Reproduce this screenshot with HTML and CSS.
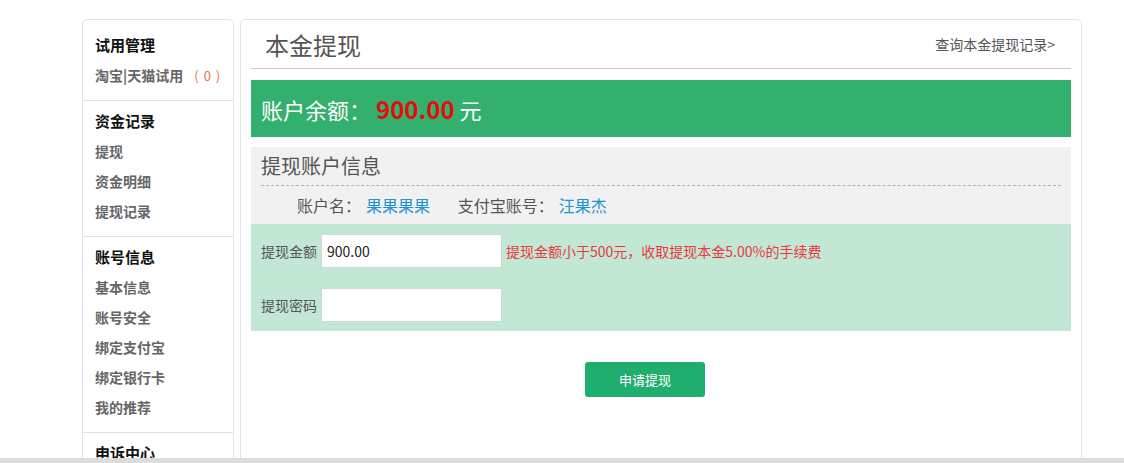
FILE: index.html
```html
<!DOCTYPE html>
<html lang="zh-CN">
<head>
    <meta charset="UTF-8" />
    <title>本金提现</title>
    <link rel="stylesheet" href="styles.css">
</head>
<body>
    <div class="wrap">
        <div class="side-menu">
            <div class="menu-group">
                <div class="menu-title">试用管理</div>
                <a class="menu-item" href="#">淘宝|天猫试用 <span class="count">( 0 )</span></a>
            </div>
            <div class="menu-group">
                <div class="menu-title">资金记录</div>
                <a class="menu-item" href="#">提现</a>
                <a class="menu-item" href="#">资金明细</a>
                <a class="menu-item" href="#">提现记录</a>
            </div>
            <div class="menu-group">
                <div class="menu-title">账号信息</div>
                <a class="menu-item" href="#">基本信息</a>
                <a class="menu-item" href="#">账号安全</a>
                <a class="menu-item" href="#">绑定支付宝</a>
                <a class="menu-item" href="#">绑定银行卡</a>
                <a class="menu-item" href="#">我的推荐</a>
            </div>
            <div class="menu-group">
                <div class="menu-title">申诉中心</div>
                <a class="menu-item" href="#">我的申诉</a>
            </div>
        </div>

        <div class="main-box">
            <div class="page-head">
                <h2>本金提现</h2>
                <a class="head-link" href="#">查询本金提现记录&gt;</a>
            </div>

            <div class="balance-bar">
                账户余额：<span class="balance-num">900.00</span> 元
            </div>

            <div class="account-info">
                <div class="info-title">提现账户信息</div>
                <div class="info-row">
                    <span class="info-label">账户名：</span><span class="info-value">果果果果</span>
                    <span class="info-label info-gap">支付宝账号：</span><span class="info-value">汪果杰</span>
                </div>
            </div>

            <div class="withdraw-form">
                <div class="form-row">
                    <label class="form-label">提现金额</label>
                    <input class="form-input" type="text" value="900.00" />
                    <span class="form-tip">提现金额小于500元，收取提现本金5.00%的手续费</span>
                </div>
                <div class="form-row">
                    <label class="form-label">提现密码</label>
                    <input class="form-input" type="password" value="" />
                </div>
            </div>

            <button class="submit-btn">申请提现</button>
        </div>
    </div>
    <div class="scroll-strip"></div>
</body>
</html>
```

FILE: styles.css
```css
body {
    font-family: "Noto Sans CJK SC", "Liberation Sans", sans-serif;
    background: #fff;
    margin: 0;
    padding: 19px 0 0;
    color: #555;
}
a {
    text-decoration: none;
}
.wrap {
    display: flex;
    align-items: flex-start;
    gap: 6px;
    margin-left: 82px;
    width: 1000px;
}
.side-menu {
    width: 152px;
    box-sizing: border-box;
    border: 1px solid #e3e3e3;
    border-radius: 5px;
    padding-top: 5px;
}
.menu-group {
    display: flex;
    flex-direction: column;
    padding: 5px 0 10px 12px;
    border-bottom: 1px solid #e3e3e3;
}
.menu-group:first-child {
    padding-bottom: 9px;
}
.menu-title {
    font-size: 15px;
    font-weight: bold;
    color: #111;
    line-height: 30px;
}
.menu-item {
    font-size: 14px;
    font-weight: bold;
    color: #666;
    line-height: 30px;
}
.count {
    color: #e4774f;
    font-weight: normal;
    font-size: 13px;
    margin-left: 8px;
    letter-spacing: 1px;
}
.main-box {
    flex: 1;
    box-sizing: border-box;
    border: 1px solid #e3e3e3;
    border-radius: 5px;
    padding: 0 10px 50px;
    min-height: 450px;
}
.page-head {
    display: flex;
    justify-content: space-between;
    align-items: center;
    height: 48px;
    padding: 0 16px 0 14px;
    border-bottom: 1px solid #b9cfd6;
}
.page-head h2 {
    margin: 0;
    font-size: 24px;
    font-weight: normal;
    color: #555;
}
.head-link {
    font-size: 14px;
    color: #555;
}
.balance-bar {
    margin-top: 11px;
    height: 57px;
    line-height: 57px;
    background: #33b06d;
    color: #fff;
    font-size: 22px;
    padding-left: 10px;
}
.balance-num {
    color: #e20d0d;
    font-weight: bold;
    font-size: 24px;
    margin-left: 5px;
}
.account-info {
    margin-top: 10px;
    background: #f1f1f1;
    padding: 0 10px;
}
.info-title {
    font-size: 20px;
    color: #555;
    height: 38px;
    line-height: 38px;
    border-bottom: 1px dashed #b2b2b2;
}
.info-row {
    height: 38px;
    line-height: 38px;
    padding-left: 36px;
    font-size: 16px;
}
.info-label {
    color: #555;
}
.info-value {
    color: #1d95d2;
    margin-left: 5px;
}
.info-gap {
    margin-left: 24px;
}
.withdraw-form {
    background: #c3e7d5;
    padding: 10px 10px 9px;
}
.form-row {
    display: flex;
    align-items: center;
    gap: 4px;
    height: 34px;
}
.form-row + .form-row {
    margin-top: 20px;
}
.form-label {
    font-size: 14px;
    color: #555;
    width: 56px;
}
.form-input {
    width: 181px;
    height: 34px;
    box-sizing: border-box;
    border: 1px solid #cfd8d4;
    background: #fff;
    padding: 0 5px;
    font-family: "Noto Sans CJK SC", "Liberation Sans", sans-serif;
    font-size: 14px;
    color: #222;
    outline: none;
}
.form-tip {
    font-size: 14px;
    color: #e83a3a;
}
.submit-btn {
    display: block;
    margin: 31px 0 0 334px;
    width: 120px;
    height: 35px;
    background: #1fae6e;
    color: #fff;
    border: none;
    border-radius: 3px;
    font-family: "Noto Sans CJK SC", "Liberation Sans", sans-serif;
    font-size: 13px;
    cursor: pointer;
}
.scroll-strip {
    position: fixed;
    left: 0;
    right: 0;
    bottom: 0;
    height: 5px;
    background: #dcdcdc;
}
```
